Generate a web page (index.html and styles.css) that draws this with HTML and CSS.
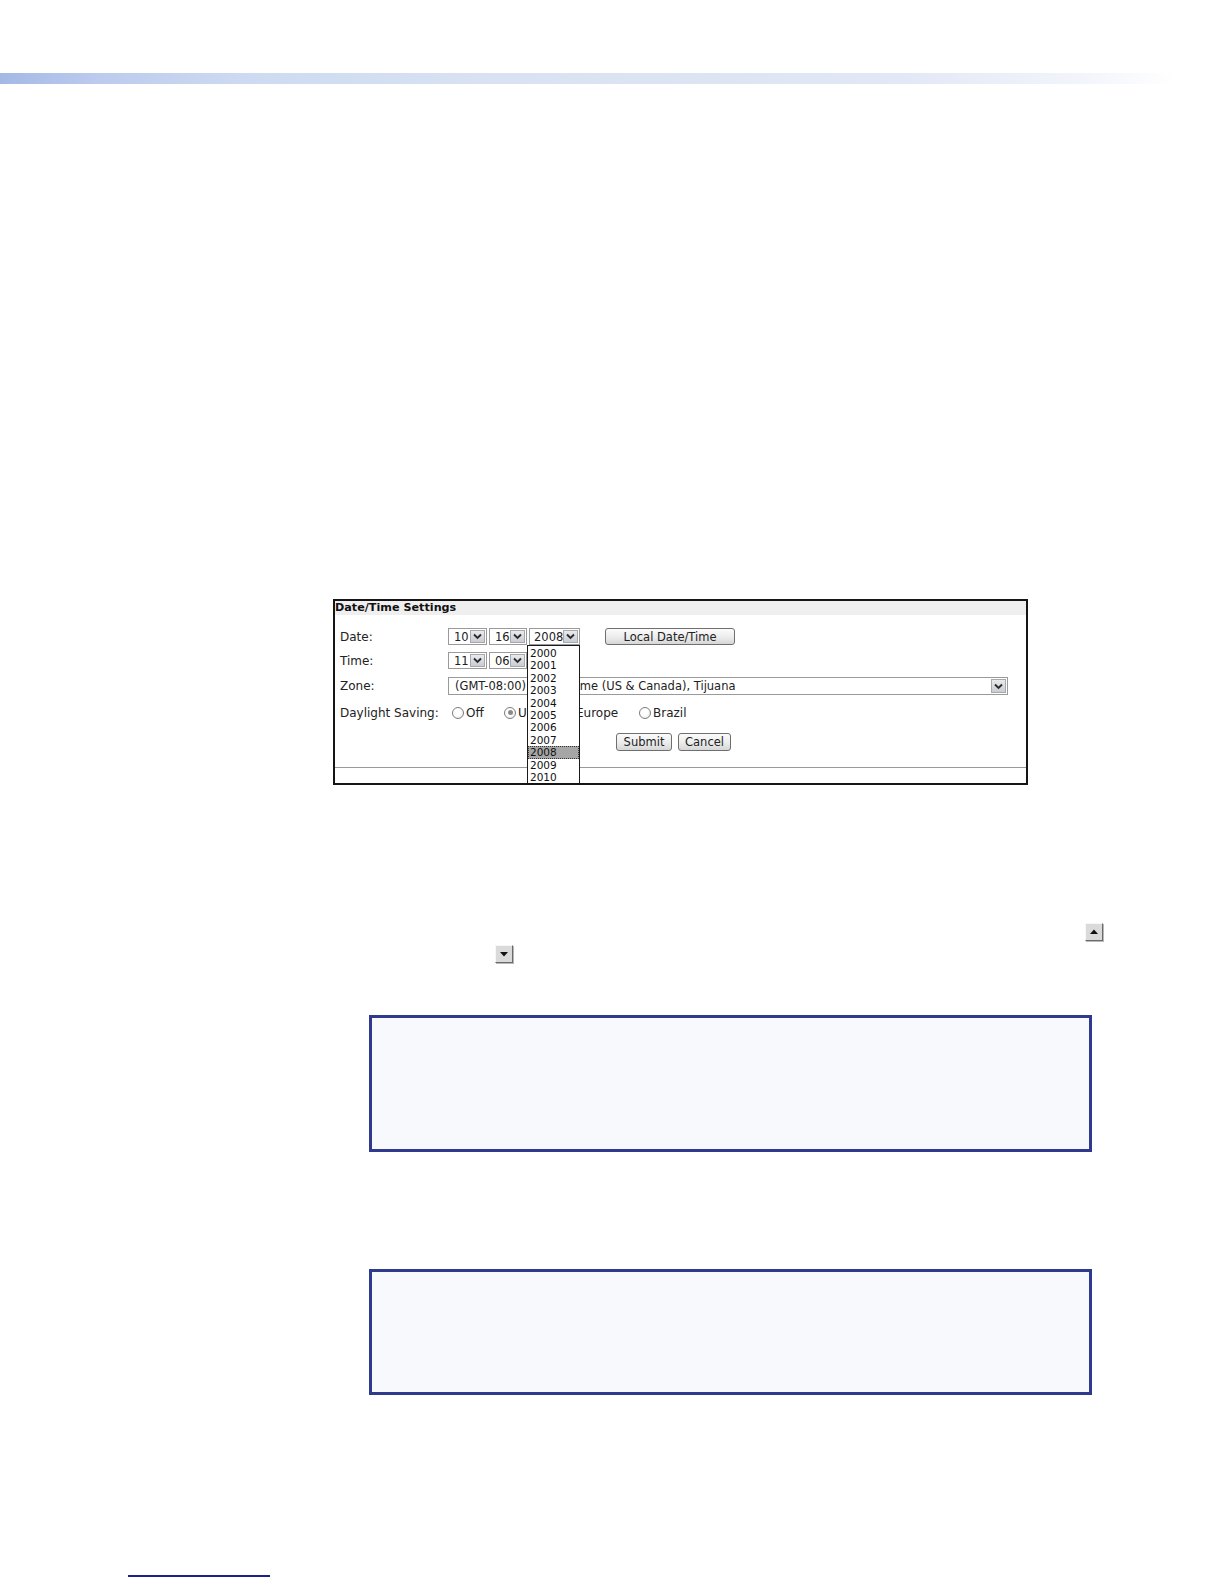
FILE: index.html
```html
<!DOCTYPE html>
<html>
<head>
<meta charset="utf-8">
<title>Date/Time Settings</title>
<link rel="stylesheet" href="styles.css">
</head>
<body>
<div class="page">
  <div class="topbar"></div>

  <section class="panel">
    <div class="panel-title">Date/Time Settings</div>
    <div class="panel-body">
      <div class="row row-date">
        <span class="label">Date:</span>
        <div class="controls">
          <span class="sel sel-sm"><span class="val">10</span><span class="arr"><svg viewBox="0 0 9 7" width="9" height="7"><path d="M1 1.5 L4.5 5 L8 1.5" fill="none" stroke="#2b2b2b" stroke-width="1.9"/></svg></span></span>
          <span class="sel sel-md"><span class="val">16</span><span class="arr"><svg viewBox="0 0 9 7" width="9" height="7"><path d="M1 1.5 L4.5 5 L8 1.5" fill="none" stroke="#2b2b2b" stroke-width="1.9"/></svg></span></span>
          <span class="sel sel-yr"><span class="val">2008</span><span class="arr"><svg viewBox="0 0 9 7" width="9" height="7"><path d="M1 1.5 L4.5 5 L8 1.5" fill="none" stroke="#2b2b2b" stroke-width="1.9"/></svg></span></span>
          <span class="btn btn-local">Local Date/Time</span>
        </div>
      </div>
      <div class="row row-time">
        <span class="label">Time:</span>
        <div class="controls">
          <span class="sel sel-sm"><span class="val">11</span><span class="arr"><svg viewBox="0 0 9 7" width="9" height="7"><path d="M1 1.5 L4.5 5 L8 1.5" fill="none" stroke="#2b2b2b" stroke-width="1.9"/></svg></span></span>
          <span class="sel sel-md"><span class="val">06</span><span class="arr"><svg viewBox="0 0 9 7" width="9" height="7"><path d="M1 1.5 L4.5 5 L8 1.5" fill="none" stroke="#2b2b2b" stroke-width="1.9"/></svg></span></span>
        </div>
      </div>
      <div class="row row-zone">
        <span class="label">Zone:</span>
        <div class="controls">
          <span class="sel sel-zone"><span class="val">(GMT-08:00) Pacific Time (US &amp; Canada), Tijuana</span><span class="arr"><svg viewBox="0 0 9 7" width="9" height="7"><path d="M1 1.5 L4.5 5 L8 1.5" fill="none" stroke="#2b2b2b" stroke-width="1.9"/></svg></span></span>
        </div>
      </div>
      <div class="row row-dst">
        <span class="label">Daylight Saving:</span>
        <div class="controls radios">
          <span class="opt opt-off"><span class="radio"></span>Off</span>
          <span class="opt opt-us"><span class="radio checked"></span>US</span>
          <span class="opt opt-eu"><span class="radio"></span>Europe</span>
          <span class="opt opt-br"><span class="radio"></span>Brazil</span>
        </div>
      </div>
      <div class="row row-actions">
        <span class="btn btn-submit">Submit</span>
        <span class="btn btn-cancel">Cancel</span>
      </div>
    </div>
    <div class="panel-rule"></div>

    <ul class="dropdown">
      <li>2000</li>
      <li>2001</li>
      <li>2002</li>
      <li>2003</li>
      <li>2004</li>
      <li>2005</li>
      <li>2006</li>
      <li>2007</li>
      <li class="current">2008</li>
      <li>2009</li>
      <li>2010</li>
    </ul>
  </section>

  <div class="arrows">
    <div class="arrow-line up-line">
      <span class="icon-btn"><svg viewBox="0 0 16 16" width="16" height="16"><path d="M4 10 L8 5.5 L12 10 Z" fill="#111"/></svg></span>
    </div>
    <div class="arrow-line down-line">
      <span class="icon-btn"><svg viewBox="0 0 16 16" width="16" height="16"><path d="M4 6 L12 6 L8 10.5 Z" fill="#111"/></svg></span>
    </div>
  </div>

  <div class="note note-1"></div>
  <div class="note note-2"></div>

  <div class="footer-rule"></div>
</div>
</body>
</html>
```

FILE: styles.css
```css
html, body {
  margin: 0;
  padding: 0;
  background: #ffffff;
}

body {
  font-family: "DejaVu Sans", Verdana, sans-serif;
  color: #222222;
}

.page {
  width: 1224px;
  min-height: 1584px;
  display: flex;
  flex-direction: column;
  align-items: flex-start;
}

.topbar {
  margin-top: 73px;
  width: 1224px;
  height: 11px;
  background: linear-gradient(90deg, #a3b9e4 0%, #bccbee 8%, #cddaf1 20%, #d8e2f2 40%, #dde5f3 60%, #e2e8f5 74%, #f1f4fb 88%, #ffffff 96%);
}

/* ---------- panel ---------- */
.panel {
  position: relative;
  margin: 515px 0 0 333px;
  width: 691px;
  height: 182px;
  border: 2px solid #151515;
  overflow: hidden;
  background: #ffffff;
}

.panel-title {
  height: 14px;
  line-height: 14px;
  background: #efefef;
  font-weight: bold;
  font-size: 11.2px;
  color: #111111;
}

.panel-body {
  padding: 13px 0 0 5px;
  font-size: 12px;
}

.row {
  display: flex;
  align-items: center;
}

.row-date { height: 17px; }
.row-time { height: 17px; margin-top: 7px; }
.row-zone { height: 18px; margin-top: 8px; }
.row-dst { height: 15px; margin-top: 10px; }
.row-actions { height: 18px; margin-top: 13px; padding-left: 276px; }

.label {
  width: 108px;
  flex: none;
  color: #222222;
}

.controls {
  display: flex;
  align-items: center;
}

/* selects */
.sel {
  box-sizing: border-box;
  display: flex;
  align-items: center;
  justify-content: space-between;
  height: 17px;
  border: 1px solid #9a9a9a;
  background: #ffffff;
  padding-left: 5px;
  padding-right: 1px;
  font-size: 11.5px;
  overflow: hidden;
  white-space: nowrap;
}

.sel .val {
  overflow: hidden;
  flex: 1;
}

.sel .arr {
  box-sizing: border-box;
  flex: none;
  width: 15px;
  height: 13px;
  border: 1px solid #a9a9a9;
  background: linear-gradient(#e8eaee, #c9ccd2);
  display: flex;
  align-items: center;
  justify-content: center;
}

.sel .arr svg { display: block; }

.sel-sm { width: 39px; margin-right: 2px; }
.sel-md { width: 38px; margin-right: 2px; }
.sel-yr { width: 51px; margin-right: 25px; padding-left: 4px; }
.sel-zone { width: 560px; height: 18px; padding-left: 6px; }
.sel-zone .arr { height: 14px; width: 15px; }

/* buttons */
.btn {
  box-sizing: border-box;
  display: inline-flex;
  align-items: center;
  justify-content: center;
  height: 18px;
  border: 1px solid #6f6f6f;
  border-radius: 3px;
  background: linear-gradient(#fbfbfb 0%, #ececec 55%, #d6d6d6 100%);
  font-size: 11.5px;
  color: #222222;
}

.btn-local { width: 130px; height: 17px; }
.btn-submit { width: 56px; margin-right: 6px; }
.btn-cancel { width: 53px; }

/* radios */
.radios { padding-left: 4px; }

.opt {
  display: inline-flex;
  align-items: center;
  gap: 2px;
}

.opt-off { width: 52px; }
.opt-us { width: 58px; }
.opt-eu { width: 77px; }

.radio {
  box-sizing: border-box;
  width: 12px;
  height: 12px;
  border: 1px solid #7d7d7d;
  border-radius: 50%;
  background: radial-gradient(circle at 40% 40%, #ffffff 40%, #e2e2e2 100%);
  position: relative;
}

.radio.checked::after {
  content: "";
  position: absolute;
  left: 2.5px;
  top: 2.5px;
  width: 5px;
  height: 5px;
  border-radius: 50%;
  background: #8a8a8a;
}

.panel-rule {
  margin-top: 16px;
  height: 1px;
  background: #9a9a9a;
}

/* dropdown list overlay */
.dropdown {
  position: absolute;
  left: 192px;
  top: 44px;
  box-sizing: border-box;
  width: 53px;
  margin: 0;
  padding: 1px 0 0 0;
  list-style: none;
  border: 1px solid #1a1a1a;
  background: #ffffff;
}

.dropdown li {
  height: 12.4px;
  line-height: 12.4px;
  font-size: 10.5px;
  padding-left: 2px;
  color: #111111;
}

.dropdown li.current {
  background: #a6a6a6;
  outline: 1px dotted #333333;
  outline-offset: -1px;
}

/* arrow icons line */
.arrows {
  margin-top: 137px;
  width: 1224px;
  display: flex;
  flex-direction: column;
}

.arrow-line {
  height: 21px;
  display: flex;
  align-items: flex-start;
  box-sizing: border-box;
}

.up-line { padding-left: 1085px; padding-top: 1px; }
.down-line { padding-left: 495px; padding-top: 2px; }

.icon-btn {
  box-sizing: border-box;
  width: 18px;
  height: 18px;
  display: flex;
  align-items: center;
  justify-content: center;
  background: #dadada;
  border-top: 1px solid #f7f7f7;
  border-left: 1px solid #f7f7f7;
  border-right: 1px solid #6a6a6a;
  border-bottom: 1px solid #6a6a6a;
  box-shadow: 1px 1px 0 #b8b8b8;
}

.icon-btn svg { display: block; }

/* note boxes */
.note {
  box-sizing: border-box;
  margin-left: 369px;
  width: 723px;
  border: 3px solid #2f3a8f;
  background: #f7f9fc;
}

.note-1 { margin-top: 51px; height: 137px; }
.note-2 { margin-top: 117px; height: 126px; }

.footer-rule {
  margin: 180px 0 0 128px;
  width: 142px;
  height: 2px;
  background: #1f1f8c;
}
```
